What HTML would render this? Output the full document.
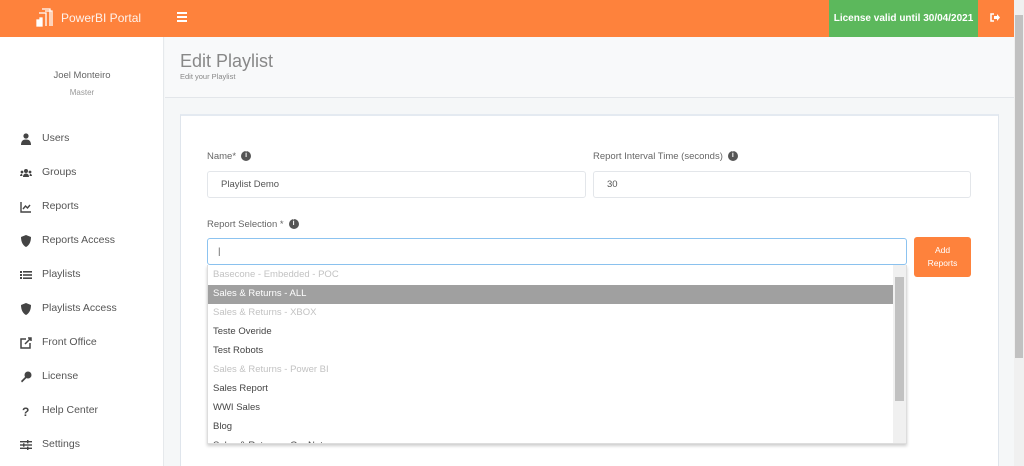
<!DOCTYPE html>
<html><head><style>
*{margin:0;padding:0;box-sizing:border-box}
html{width:1024px;height:466px;overflow:hidden}
body{width:1024px;height:466px;overflow:hidden;font-family:"Liberation Sans",sans-serif;background:#f5f7f8;position:relative;color:#555}
.hdr{position:absolute;left:0;top:0;width:1014px;height:37px;background:#fe823c}
.logo{position:absolute;left:36px;top:7px}
.brand{position:absolute;left:61px;top:11px;color:#fff;font-size:12px;opacity:.9}
.burger{position:absolute;left:177px;top:12px;width:10px}
.burger i{display:block;height:2px;background:#fff;margin-bottom:2px}
.lic{position:absolute;left:829px;top:0;width:149px;height:37px;background:#5cb85c;color:#fff;font-size:10px;font-weight:bold;line-height:37px;text-align:center}
.out{position:absolute;left:990px;top:13px;width:10px;height:9px}
.side{position:absolute;left:0;top:37px;width:164px;height:429px;background:#fff;border-right:1px solid #e6e9ec}
.user{position:absolute;left:0;top:33px;width:164px;text-align:center;font-size:9.5px;color:#666}
.user small{display:block;font-size:8px;color:#999;margin-top:7px}
.nav{position:absolute;left:20px;font-size:10.5px;color:#555}
.nav span{position:absolute;left:22px;top:-1px;white-space:nowrap}
.nav svg{position:absolute;left:0;top:0}
.titlebar{position:absolute;left:165px;top:37px;width:849px;height:61px;background:#f8f9fa;border-bottom:1px solid #e3e6ea}
.title{position:absolute;left:15px;top:14px;font-size:18px;color:#888}
.sub{position:absolute;left:15px;top:35px;font-size:7.5px;color:#888}
.card{position:absolute;left:180px;top:114px;width:819px;height:352px;background:#fff;border:1px solid #dfe5ec;border-top:2px solid #e4eaf1;border-bottom:none}
.lbl{position:absolute;font-size:9.5px;color:#666}
.inf{display:inline-block;width:10px;height:10px;border-radius:50%;background:#555;color:#fff;font-size:7px;font-weight:bold;text-align:center;line-height:10px;vertical-align:top;margin-left:5px}
.inp{position:absolute;height:27px;border:1px solid #e3e6ea;border-radius:3px;font-size:9.5px;color:#555;padding-left:13px;line-height:25px;background:#fff}
.btn{position:absolute;left:914px;top:237px;width:57px;height:40px;background:#fe823c;border-radius:3px;color:#fff;font-size:8.5px;text-align:center;padding-top:7px;line-height:13px}
.dd{position:absolute;left:207px;top:265px;width:700px;height:179px;background:#fff;overflow:hidden;box-shadow:0 2px 3px rgba(0,0,0,.2);border:1px solid #ddd;border-top:none;padding-top:1px}
.it{height:19px;line-height:18px;font-size:9.5px;padding-left:5px;color:#444;width:686px}
.it.g{color:#c2c2c2}
.it.s{background:#a0a0a0;color:#fff}
.dsb{position:absolute;right:0;top:0;width:13px;height:179px;background:#f0f0f0}
.pgsb{position:absolute;left:1014px;top:0;width:10px;height:466px;background:#f0f0f0}
</style></head><body>
<div class="hdr">
<svg class="logo" width="20" height="20" viewBox="0 0 20 20" fill="none" stroke="#fff" stroke-width="1.3"><path d="M6 2h8v17M9 4h7v15M3 6h7v13"/><rect x="1" y="13" width="2" height="6" fill="#fff"/><rect x="4" y="11" width="2" height="8" fill="#fff"/></svg>
<div class="brand">PowerBI Portal</div>
<div class="burger"><i></i><i></i><i></i></div>
<div class="lic">License valid until 30/04/2021</div>
<svg class="out" viewBox="0 0 10 9"><path d="M4 1H1v7h3" stroke="#fff" stroke-width="1.5" fill="none"/><path d="M4 3h3V1l3 3.5L7 8V6H4z" fill="#fff"/></svg>
</div>
<div class="side">
<div class="user">Joel Monteiro<small>Master</small></div>
<div class="nav" style="top:96px"><svg width="12" height="12" viewBox="0 0 12 12" fill="#444"><circle cx="6" cy="3" r="2.6"/><path d="M1 12c0-4 2-5.5 5-5.5S11 8 11 12z"/></svg><span>Users</span></div>
<div class="nav" style="top:130px"><svg width="12" height="12" viewBox="0 0 12 12" fill="#444"><circle cx="6" cy="4" r="2"/><circle cx="2" cy="5" r="1.4"/><circle cx="10" cy="5" r="1.4"/><path d="M3 10c0-2.5 1.5-3.5 3-3.5S9 7.5 9 10zM0 9c0-1.5 1-2.3 2-2.3L2.5 9zM12 9c0-1.5-1-2.3-2-2.3L9.5 9z"/></svg><span>Groups</span></div>
<div class="nav" style="top:164px"><svg width="12" height="12" viewBox="0 0 12 12" fill="none" stroke="#444" stroke-width="1.4"><path d="M1 1v10h10"/><path d="M3 8l2.5-3 2 2L10 4"/></svg><span>Reports</span></div>
<div class="nav" style="top:198px"><svg width="12" height="12" viewBox="0 0 12 12" fill="#444"><path d="M6 0l5 2c0 5-2 8.5-5 10C3 10.5 1 7 1 2z"/></svg><span>Reports Access</span></div>
<div class="nav" style="top:232px"><svg width="12" height="12" viewBox="0 0 12 12" fill="#444"><rect x="0" y="2" width="2" height="2"/><rect x="0" y="5" width="2" height="2"/><rect x="0" y="8" width="2" height="2"/><rect x="3" y="2" width="9" height="1.6"/><rect x="3" y="5.2" width="9" height="1.6"/><rect x="3" y="8.4" width="9" height="1.6"/></svg><span>Playlists</span></div>
<div class="nav" style="top:266px"><svg width="12" height="12" viewBox="0 0 12 12" fill="#444"><path d="M6 0l5 2c0 5-2 8.5-5 10C3 10.5 1 7 1 2z"/></svg><span>Playlists Access</span></div>
<div class="nav" style="top:300px"><svg width="12" height="12" viewBox="0 0 12 12" fill="none" stroke="#444" stroke-width="1.5"><path d="M6 2H1v9h9V6"/><path d="M5 7l6-6M8 1h3v3"/></svg><span>Front Office</span></div>
<div class="nav" style="top:334px"><svg width="12" height="12" viewBox="0 0 12 12" fill="#444"><circle cx="8" cy="4" r="3.5"/><path d="M5.5 5.5L1 10l1 1.5L6.5 7z"/></svg><span>License</span></div>
<div class="nav" style="top:368px"><svg width="12" height="12" viewBox="0 0 12 12"><text x="2" y="11" font-size="12" font-weight="bold" fill="#444" font-family="Liberation Sans">?</text></svg><span>Help Center</span></div>
<div class="nav" style="top:402px"><svg width="12" height="12" viewBox="0 0 12 12" fill="#444"><rect x="0" y="2" width="12" height="1.4"/><rect x="0" y="5.3" width="12" height="1.4"/><rect x="0" y="8.6" width="12" height="1.4"/><rect x="7" y="1" width="1.5" height="3.4"/><rect x="3" y="4.3" width="1.5" height="3.4"/><rect x="7" y="7.6" width="1.5" height="3.4"/></svg><span>Settings</span></div>
</div>
<div class="titlebar"><div class="title">Edit Playlist</div><div class="sub">Edit your Playlist</div></div>
<div class="card"></div>
<div class="lbl" style="left:207px;top:151px">Name*<span class="inf">i</span></div>
<div class="lbl" style="left:593px;top:151px">Report Interval Time (seconds)<span class="inf">i</span></div>
<div class="inp" style="left:207px;top:171px;width:379px">Playlist Demo</div>
<div class="inp" style="left:593px;top:171px;width:378px">30</div>
<div class="lbl" style="left:207px;top:219px">Report Selection *<span class="inf">i</span></div>
<div class="inp" style="left:207px;top:238px;width:700px;border-color:#8cc3f0;padding-left:10px">|</div>
<div class="btn">Add<br>Reports</div>
<div class="dd">
<div class="it g">Basecone - Embedded - POC</div>
<div class="it s">Sales &amp; Returns - ALL</div>
<div class="it g">Sales &amp; Returns - XBOX</div>
<div class="it">Teste Overide</div>
<div class="it">Test Robots</div>
<div class="it g">Sales &amp; Returns - Power BI</div>
<div class="it">Sales Report</div>
<div class="it">WWI Sales</div>
<div class="it">Blog</div>
<div class="it">Sales &amp; Returns - OneNote</div>
<div class="dsb"><div style="position:absolute;left:2px;top:12px;width:9px;height:124px;background:#c1c1c1"></div></div>
</div>
<div class="pgsb"><div style="position:absolute;left:1px;top:15px;width:8px;height:343px;background:#c1c1c1"></div></div>
</body></html>
